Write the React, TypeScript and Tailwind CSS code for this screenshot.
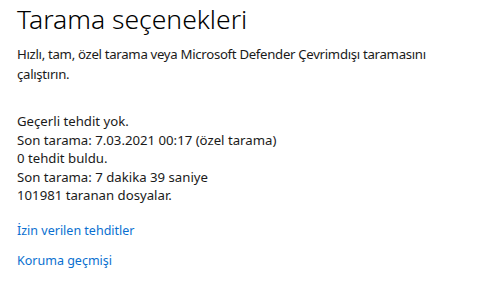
export default function App() {
  return (
    <div className="w-[500px] h-[301px] bg-white px-[17px] pt-[1px] overflow-hidden" style={{ fontFamily: '"Noto Sans", "Open Sans", sans-serif' }}>
      <h1 className="text-[26.5px] font-light text-black leading-[36px]">Tarama seçenekleri</h1>
      <div className="mt-[8px] text-[13.2px] leading-[19.5px] tracking-[-0.3px] text-[#1a1a1a] w-[450px]">
        Hızlı, tam, özel tarama veya Microsoft Defender Çevrimdışı taramasını çalıştırın.
      </div>
      <div className="mt-[28px] text-[13.2px] leading-[18.6px] text-[#1a1a1a]">
        <p>Geçerli tehdit yok.</p>
        <p>Son tarama: 7.03.2021 00:17 (özel tarama)</p>
        <p>0 tehdit buldu.</p>
        <p>Son tarama: 7 dakika 39 saniye</p>
        <p>101981 taranan dosyalar.</p>
      </div>
      <div className="mt-[17px] flex flex-col gap-[12px] text-[12.5px] leading-[18px] text-[#0a6fd0]">
        <a href="#">İzin verilen tehditler</a>
        <a href="#">Koruma geçmişi</a>
      </div>
    </div>
  );
}
